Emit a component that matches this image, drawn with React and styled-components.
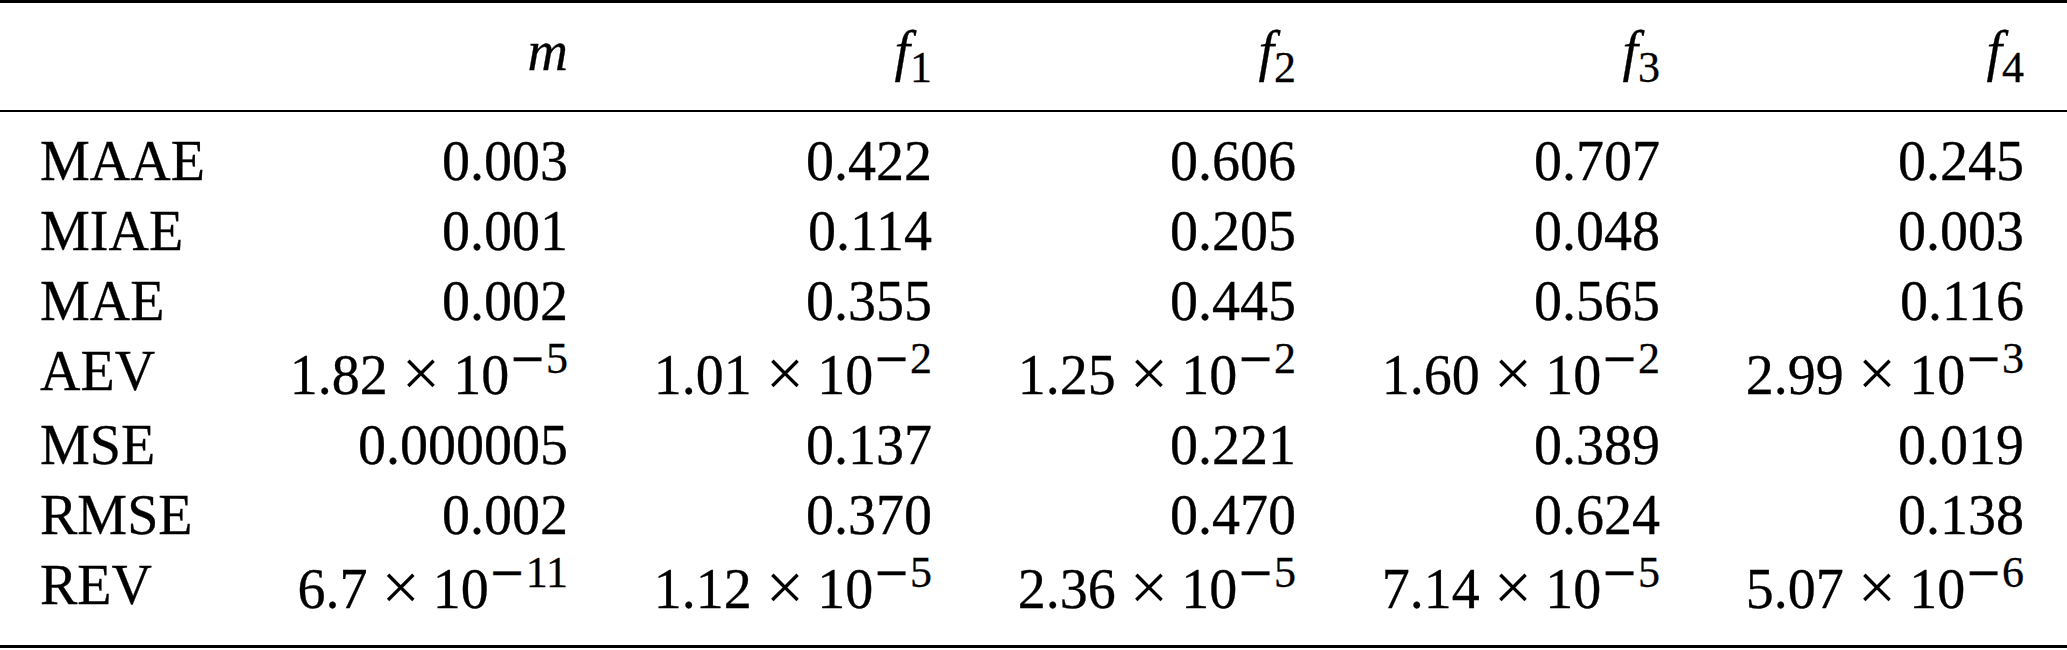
import React from "react";
import styled, { createGlobalStyle } from "styled-components";

const GlobalStyle = createGlobalStyle`
  html, body {
    margin: 0;
    padding: 0;
    background: #ffffff;
  }
  body {
    font-family: "Liberation Serif", "Times New Roman", serif;
    color: #000000;
  }
`;

const Frame = styled.div`
  width: 2067px;
  display: flex;
  flex-direction: column;
  background: #ffffff;
`;

const Rule = styled.div`
  height: ${(p) => p.$weight}px;
  background: #000000;
`;

const Section = styled.div`
  display: flex;
  flex-direction: column;
  padding: ${(p) => p.$top}px 0 ${(p) => p.$bottom}px;
`;

const Row = styled.div`
  display: grid;
  grid-template-columns: 164px repeat(5, 364px);
  padding: 0 43px 0 40px;
  font-size: 56px;
  line-height: 1.25;
  white-space: nowrap;
  -webkit-text-stroke: 0.3px #000000;
`;

const Label = styled.div`
  text-align: left;
`;

const Value = styled.div`
  text-align: right;
`;

const Var = styled.span`
  font-style: italic;
`;

const Sub = styled.span`
  font-style: normal;
  font-size: 44px;
  line-height: 1;
  vertical-align: -12px;
`;

const Sup = styled.span`
  font-size: 44px;
  line-height: 1.05;
  vertical-align: 21px;
`;

const Minus = styled.span`
  font-family: "DejaVu Sans", sans-serif;
  line-height: 1;
`;

const Cross = styled.span`
  font-size: 68px;
  line-height: 0;
  vertical-align: -2px;
  margin: 0 13px 0 14px;
  -webkit-text-stroke: 0;
`;

const heads = [
  { v: "m" },
  { v: "f", s: "1" },
  { v: "f", s: "2" },
  { v: "f", s: "3" },
  { v: "f", s: "4" },
];

const rows = [
  ["MAAE", "0.003", "0.422", "0.606", "0.707", "0.245"],
  ["MIAE", "0.001", "0.114", "0.205", "0.048", "0.003"],
  ["MAE", "0.002", "0.355", "0.445", "0.565", "0.116"],
  ["AEV", ["1.82", "5"], ["1.01", "2"], ["1.25", "2"], ["1.60", "2"], ["2.99", "3"]],
  ["MSE", "0.000005", "0.137", "0.221", "0.389", "0.019"],
  ["RMSE", "0.002", "0.370", "0.470", "0.624", "0.138"],
  ["REV", ["6.7", "11"], ["1.12", "5"], ["2.36", "5"], ["7.14", "5"], ["5.07", "6"]],
];

function Sci({ mant, exp }) {
  return (
    <>
      {mant}
      <Cross>×</Cross>
      10
      <Sup>
        <Minus>−</Minus>
        {exp}
      </Sup>
    </>
  );
}

export default function App() {
  return (
    <>
      <GlobalStyle />
      <Frame>
        <Rule $weight={3} />
        <Section $top={13} $bottom={20}>
          <Row>
            <Label />
            {heads.map((h, i) => (
              <Value key={i}>
                <Var>{h.v}</Var>
                {h.s && <Sub>{h.s}</Sub>}
              </Value>
            ))}
          </Row>
        </Section>
        <Rule $weight={2} />
        <Section $top={13.5} $bottom={21}>
          {rows.map(([label, ...vals]) => (
            <Row key={label}>
              <Label>{label}</Label>
              {vals.map((v, i) => (
                <Value key={i}>
                  {Array.isArray(v) ? <Sci mant={v[0]} exp={v[1]} /> : v}
                </Value>
              ))}
            </Row>
          ))}
        </Section>
        <Rule $weight={3} />
      </Frame>
    </>
  );
}
